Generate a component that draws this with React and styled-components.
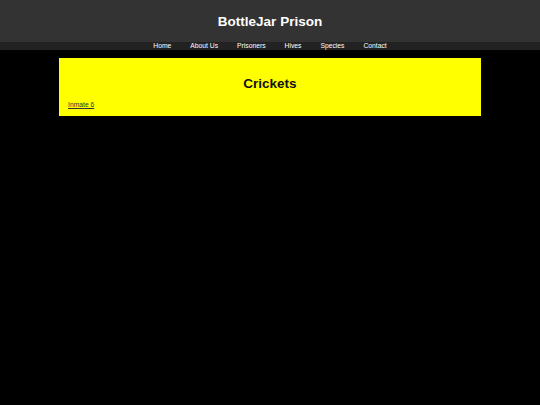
import styled, { createGlobalStyle } from 'styled-components';

const GlobalStyle = createGlobalStyle`
  html, body {
    margin: 0;
    padding: 0;
    background-color: #000;
    font-family: "Liberation Sans", Arial, sans-serif;
  }
`;

const navItems = ['Home', 'About Us', 'Prisoners', 'Hives', 'Species', 'Contact'];

const App = () => {
  return (
    <>
      <GlobalStyle />
      <Header>
        <SiteTitle>BottleJar Prison</SiteTitle>
      </Header>
      <NavBar>
        {navItems.map((item) => (
          <NavLink key={item} href="#">
            {item}
          </NavLink>
        ))}
      </NavBar>
      <Main>
        <Panel>
          <PanelTitle>Crickets</PanelTitle>
          <InmateLink href="#">Inmate 6</InmateLink>
        </Panel>
      </Main>
    </>
  );
};

export default App;

const Header = styled.header`
  display: flex;
  align-items: center;
  justify-content: center;
  height: 42px;
  background-color: #333;
`;

const SiteTitle = styled.h1`
  margin: 0;
  color: #fff;
  font-size: 13.5px;
  font-weight: bold;
`;

const NavBar = styled.nav`
  display: flex;
  justify-content: center;
  align-items: center;
  height: 8px;
  background-color: #222;
`;

const NavLink = styled.a`
  padding: 0 9.5px;
  color: #fff;
  font-size: 6.75px;
  line-height: 8px;
  text-decoration: none;
`;

const Main = styled.main`
  padding-top: 8px;
`;

const Panel = styled.section`
  display: flex;
  flex-direction: column;
  width: 422px;
  height: 58px;
  box-sizing: border-box;
  margin: 0 auto;
  padding: 17px 9px 0;
  background-color: #ff0;
`;

const PanelTitle = styled.h2`
  margin: 0 0 8px;
  color: #111;
  font-size: 13.5px;
  font-weight: bold;
  text-align: center;
  line-height: 18px;
`;

const InmateLink = styled.a`
  align-self: flex-start;
  color: #333;
  font-size: 6.75px;
  line-height: 8px;
  text-decoration: underline;
`;
